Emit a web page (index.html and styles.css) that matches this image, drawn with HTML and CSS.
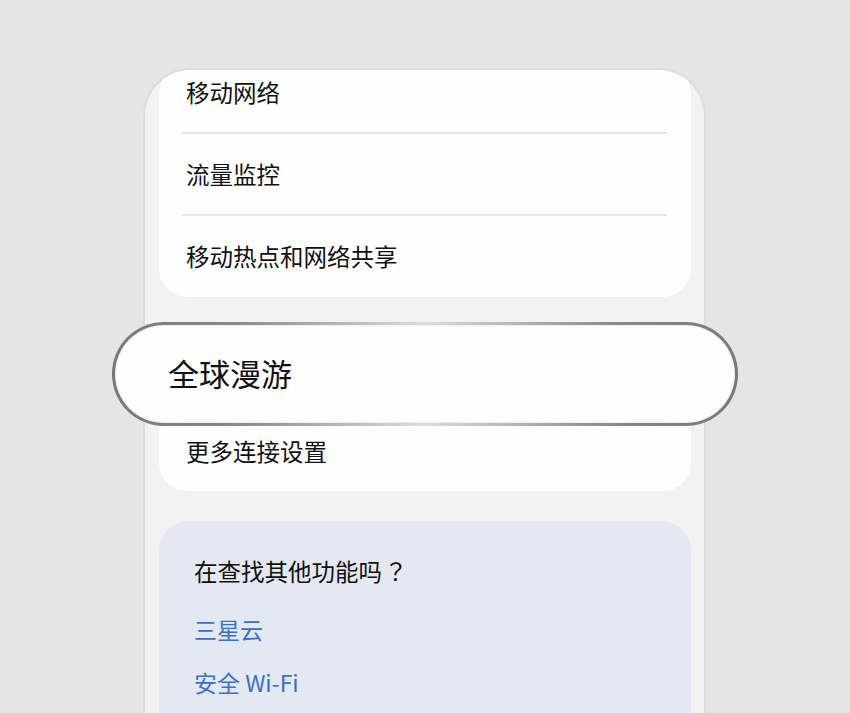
FILE: index.html
```html
<!DOCTYPE html>
<html lang="zh-CN">
<head>
<meta charset="utf-8">
<title>连接</title>
<link rel="stylesheet" href="styles.css">
</head>
<body>
<div class="stage">
  <div class="phone">
    <div class="content">
      <div class="card first">
        <div class="row">移动网络</div>
        <div class="divider"></div>
        <div class="row">流量监控</div>
        <div class="divider"></div>
        <div class="row">移动热点和网络共享</div>
      </div>
      <div class="card second">
        <div class="row tall"><span class="under-lens">全球漫游</span></div>
        <div class="row short">更多连接设置</div>
      </div>
      <div class="card tips">
        <div class="tips-title">在查找其他功能吗<span class="qmark" lang="ja">？</span></div>
        <div class="link">三星云</div>
        <div class="link">安全 Wi-Fi</div>
      </div>
    </div>
  </div>
  <div class="lens">全球漫游</div>
</div>
</body>
</html>
```
FILE: styles.css
```css
html, body {
  margin: 0;
  padding: 0;
}
body {
  background: #e5e5e5;
  font-family: "Noto Sans CJK SC", "Noto Sans", sans-serif;
  color: #111;
  width: 850px;
  height: 713px;
  overflow: hidden;
}
.stage {
  position: relative;
  width: 850px;
  height: 713px;
}
.phone {
  position: absolute;
  left: 143px;
  top: 68px;
  width: 559px;
  height: 700px;
  background: #f2f2f3;
  border: 2px solid #dcdcdc;
  border-bottom: none;
  border-radius: 48px 48px 0 0;
  overflow: hidden;
}
.content {
  margin-top: -19px;
  padding: 0 13px 0 14px;
  display: flex;
  flex-direction: column;
}
.card {
  background: #fefefe;
  border-radius: 28px;
}
.first {
  border-radius: 46px 46px 28px 28px;
}
.row {
  height: 82px;
  display: flex;
  align-items: center;
  padding-left: 27px;
  font-size: 23.5px;
  letter-spacing: 0;
}
.under-lens {
  visibility: hidden;
}
.divider {
  height: 2px;
  background: #e6e6e6;
  margin: -1px 24px -1px 23px;
  position: relative;
}
.second {
  margin-top: 26px;
}
.row.tall {
  height: 86px;
}
.row.short {
  height: 80px;
  padding-top: 2px;
}
.tips {
  margin-top: 30px;
  background: #e4e8f3;
  border-radius: 30px;
  padding: 28px 0 60px 35px;
  height: 400px;
}
.tips-title {
  font-size: 23.5px;
  line-height: 44px;
}
.qmark {
  font-family: "Noto Sans CJK JP", "Noto Sans CJK SC", sans-serif;
  margin-left: 2px;
}
.link {
  font-size: 23px;
  color: #3b6fcc;
  line-height: 34px;
  margin-top: 19px;
}
.link + .link {
  margin-top: 19px;
}
.lens {
  position: absolute;
  left: 112px;
  top: 322px;
  width: 626px;
  height: 104px;
  box-sizing: border-box;
  border: 3px solid transparent;
  border-radius: 52px;
  background:
    linear-gradient(#fefefe, #fefefe) padding-box,
    linear-gradient(90deg, #787878 0%, #8a8a8a 20%, #dcdcdc 50%, #8a8a8a 80%, #787878 100%) border-box;
  box-shadow: inset 0 0 3px rgba(0,0,0,0.15);
  display: flex;
  align-items: center;
  padding-left: 53px;
  padding-bottom: 4px;
  font-size: 31px;
  color: #111;
}
```
